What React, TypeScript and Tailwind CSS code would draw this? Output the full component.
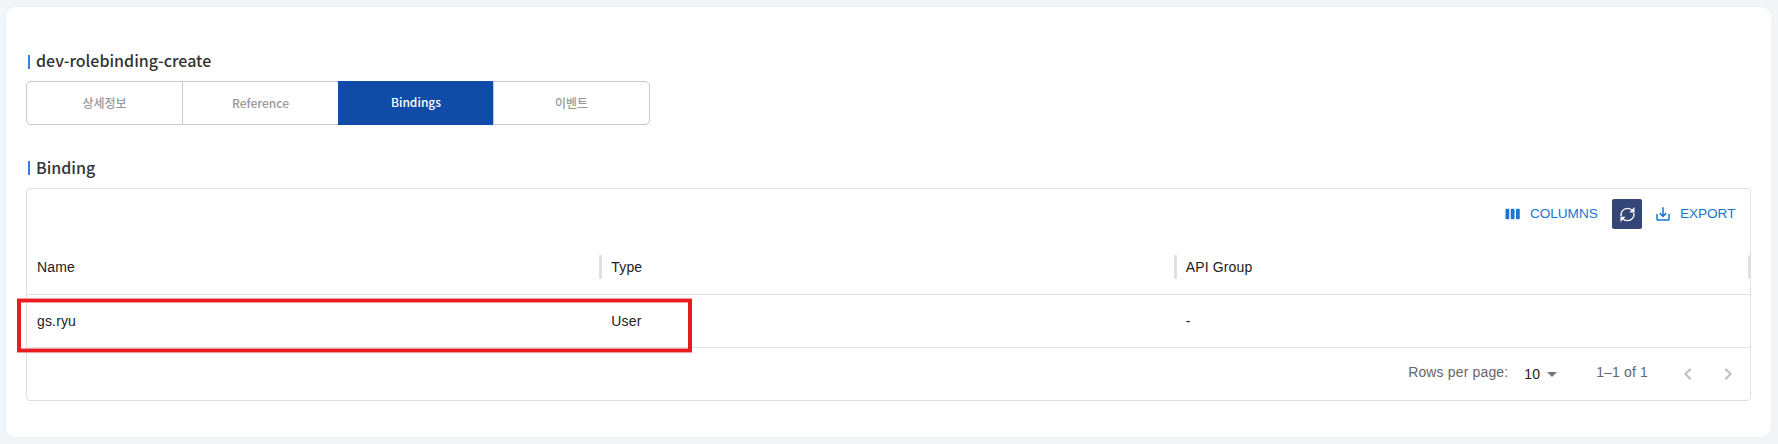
import type { ReactNode } from "react";

const KR = "font-['Noto_Sans_CJK_KR','Noto_Sans',sans-serif]";
const COLUMNS = ["Name", "Type", "API Group"];
const ROWS = [["gs.ryu", "User", "-"]];

function Icon({ d, className }: { d: string; className: string }) {
  return (
    <svg viewBox="0 0 24 24" fill="currentColor" className={className}>
      <path d={d} />
    </svg>
  );
}

function Title({ children, className }: { children: ReactNode; className: string }) {
  return (
    <h2 className={`flex h-[22px] items-center pl-[2px] ${KR} text-[16px] font-medium text-[#333] ${className}`}>
      <span className="mr-[6px] h-[14px] w-[2px] bg-[#2f80ed]" />
      <span className="pb-[2px] leading-[20px]">{children}</span>
    </h2>
  );
}

function Tab({ children, className }: { children: ReactNode; className: string }) {
  return <button className={`flex items-center justify-center ${className}`}>{children}</button>;
}

export default function App() {
  return (
    <div className="h-[444px] w-[1778px] overflow-hidden bg-[#f2f6f9] pl-[6px] pt-[7px] font-['Liberation_Sans',Arial,sans-serif]">
      <main className="relative h-[430px] w-[1765px] rounded-[10px] bg-white px-[20px] pt-[44px] shadow-[0_0_10px_rgba(0,0,0,0.03)]">
        <Title className="[&>span:last-child]:pb-[4px]">dev-rolebinding-create</Title>
        <nav className={`mt-[8px] flex h-[44px] w-[624px] text-[12px] font-medium text-[#999] ${KR}`}>
          <Tab className="w-[157px] rounded-l-[5px] border border-[#c8c8c8]">상세정보</Tab>
          <Tab className="w-[155px] border-y border-[#c8c8c8]">Reference</Tab>
          <Tab className="w-[155px] bg-[#114ba8] pb-[2px] pl-px text-white">Bindings</Tab>
          <Tab className="w-[157px] rounded-r-[5px] border border-[#c8c8c8]">이벤트</Tab>
        </nav>
        <Title className="mt-[32px]">Binding</Title>
        <section className="mt-[9px] flex h-[213px] w-[1725px] flex-col rounded-[4px] border border-[#e0e0e0] text-[14px] tracking-[0.15px] text-[#212121]">
          <div className="flex h-[50px] items-start justify-end pr-[14px] pt-[10px] text-[13.6px] tracking-[-0.04px] text-[#1976d2]">
            <button className="flex h-[30px] items-center">
              <Icon
                className="mr-[8px] size-[18px]"
                d="M6 5H3c-.55 0-1 .45-1 1v12c0 .55.45 1 1 1h3c.55 0 1-.45 1-1V6c0-.55-.45-1-1-1zm14 0h-3c-.55 0-1 .45-1 1v12c0 .55.45 1 1 1h3c.55 0 1-.45 1-1V6c0-.55-.45-1-1-1zm-7 0h-3c-.55 0-1 .45-1 1v12c0 .55.45 1 1 1h3c.55 0 1-.45 1-1V6c0-.55-.45-1-1-1z"
              />
              <span className="w-[68px] text-left">COLUMNS</span>
            </button>
            <button className="ml-[14px] flex size-[30px] items-center justify-center rounded-[2px] bg-[#344675] text-white">
              <svg viewBox="0 0 16 16" className="mt-px size-[17px]" fill="none" stroke="currentColor" strokeWidth="1.3">
                <path d="M2 9.5C1.2 5.5 4.2 2.2 8 2.2c2 0 3.6.8 4.8 2.2M14 6.5c.8 4-2.2 7.3-6 7.3-2 0-3.6-.8-4.8-2.2" />
                <path fill="currentColor" stroke="none" d="M14.6 1v5H9.8zM1.4 15v-5h4.8z" />
              </svg>
            </button>
            <button className="ml-[12px] flex h-[30px] items-center">
              <Icon className="mr-[8px] size-[18px]" d="M19 12v7H5v-7H3v7c0 1.1.9 2 2 2h14c1.1 0 2-.9 2-2v-7h-2zm-6 .67l2.59-2.58L17 11.5l-5 5-5-5 1.41-1.41L11 12.67V3h2z" />
              <span className="w-[56px] text-left">EXPORT</span>
            </button>
          </div>
          <div className="grid h-[56px] grid-cols-3 border-b border-[#e0e0e0]">
            {COLUMNS.map((c, i) => (
              <div key={c} className="flex items-center justify-between pl-[10px]">
                <span className="pt-[2px]">{c}</span>
                <i className={`h-[24px] rounded-[1px] bg-[#e0e0e0] ${i < 2 ? "-mr-[1px] w-[3px]" : "w-[2px]"}`} />
              </div>
            ))}
          </div>
          {ROWS.map((r) => (
            <div key={r[0]} className="grid h-[53px] grid-cols-3 border-b border-[#e0e0e0]">
              {r.map((v) => (
                <span key={v} className="flex items-center pl-[10px]">{v}</span>
              ))}
            </div>
          ))}
          <footer className="flex h-[52px] items-center justify-end text-[#666]">
            <span className="pb-[3px]">Rows per page:</span>
            <span className="ml-[16px] flex items-center text-[#212121]">
              10
              <Icon className="size-[24px] text-[#757575]" d="M7 10l5 5 5-5z" />
            </span>
            <span className="ml-[32px] pb-[3px]">1–1 of 1</span>
            <Icon className="ml-[28px] size-[24px] text-[#bdbdbd]" d="M15.41 16.59 10.83 12l4.58-4.59L14 6l-6 6 6 6z" />
            <Icon className="ml-[16px] mr-[10px] size-[24px] text-[#bdbdbd]" d="M8.59 16.59 13.17 12 8.59 7.41 10 6l6 6-6 6z" />
          </footer>
        </section>
        <div className="absolute left-[11px] top-[292px] h-[53px] w-[675px] border-x-4 border-y-3 border-[#e81c1f] shadow-[0_1px_0_#f59a9b,0_-1px_0_#f59a9b,inset_0_1px_0_#f59a9b,inset_0_-1px_0_#f59a9b]" />
      </main>
    </div>
  );
}
